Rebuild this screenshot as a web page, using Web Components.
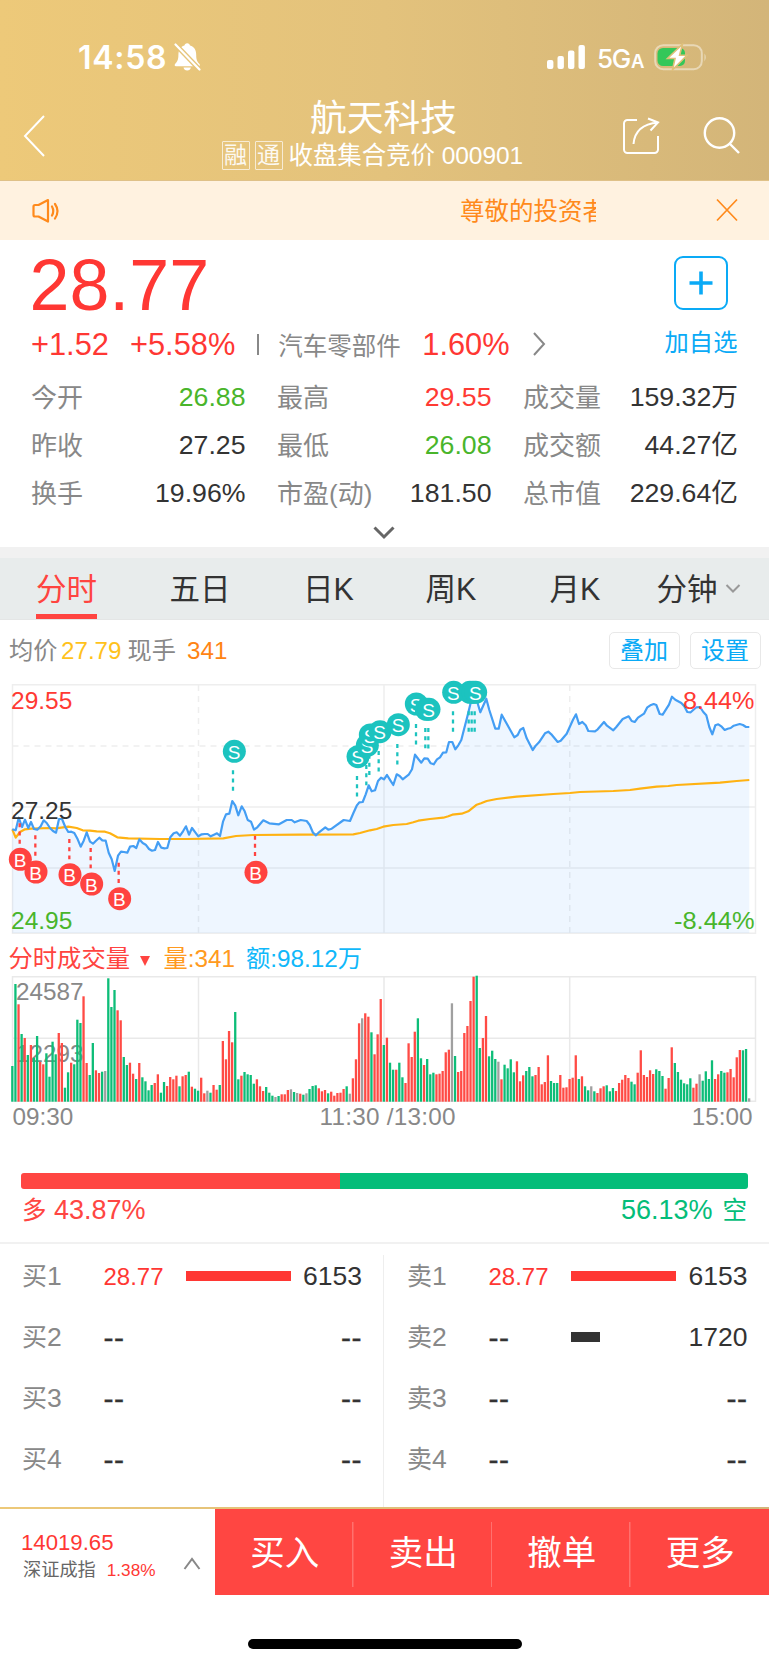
<!DOCTYPE html>
<html lang="zh-CN">
<head>
<meta charset="utf-8">
<title>航天科技 000901</title>
<style>
body{margin:0;width:769px;height:1665px;overflow:hidden;background:#fff;color:#333;font-family:"Liberation Sans","Noto Sans CJK SC",sans-serif}
</style>
</head>
<body>
<stock-app></stock-app>
<script>
const define = (name, html, init) => customElements.define(name, class extends HTMLElement {
  constructor() {
    super();
    const root = this.attachShadow({ mode: 'open' });
    const t = document.createElement('template');
    t.innerHTML = '<style>*{box-sizing:border-box}:host{display:block;box-sizing:border-box}svg{display:block;flex:none}</style>' + (typeof html === 'function' ? html(this) : html);
    root.append(t.content.cloneNode(true));
  }
  connectedCallback() { if (init) init(this, this.shadowRoot); }
});

define('status-bar', `
<style>
:host{display:flex;height:96px;padding:24px 61px 0 78px;align-items:center;color:#fff;font-family:Inter,sans-serif}
.time{font-size:32px;font-weight:600;line-height:40px;width:96px;letter-spacing:.7px;margin-top:-5px}
.sp{flex:1}
.net{font-size:26px;font-weight:500;line-height:40px;width:57px;margin-left:11px;white-space:nowrap;margin-top:-1px;letter-spacing:-1.300px}
.net small{font-size:18.500px;font-weight:600;margin-left:1px}
svg{margin-top:-6px}
</style>
<div class="time">14:58</div>
<svg width="27" height="30" viewBox="0 0 27 30"><path fill="#fff" d="M13.200 1.200c1.600 0 2.600 1 2.800 2.400 4.200 1.200 6.200 4.500 6.200 9.200 0 5.500 1.200 7.200 3.300 9.100.7.8.4 2.300-.8 2.300H1.900c-1.300 0-1.600-1.400-.8-2.300 2.300-2.300 3.300-4 3.300-9.100 0-4.700 2-8 6-9.200.2-1.400 1.200-2.400 2.800-2.400zM9.500 25.600h7.400c-.4 1.900-1.800 3-3.700 3s-3.300-1.100-3.700-3z"/><path stroke="#e6c57a" stroke-width="5" d="M.5 1.500 26 28"/><path stroke="#fff" stroke-width="2.200" stroke-linecap="round" d="M1.500 2.500 25.500 27.500"/></svg>
<div class="sp"></div>
<svg width="40" height="26" viewBox="0 0 40 26" fill="#fff"><rect x="1" y="16" width="6.400" height="9" rx="2"/><rect x="11.500" y="12" width="6.400" height="13" rx="2"/><rect x="22" y="6.500" width="6.400" height="18.500" rx="2"/><rect x="32.500" y="1" width="6.400" height="24" rx="2"/></svg>
<div class="net">5G<small>A</small></div>
<svg width="54" height="28" viewBox="0 0 54 28"><rect x="1.200" y="2.200" width="46.600" height="24" rx="8" fill="none" stroke="#fff" stroke-opacity=".45" stroke-width="2"/><path d="M50.500 10.500q2.500 3.500 0 8z" fill="#fff" fill-opacity=".5"/><path d="M9 5h17a5 5 0 0 1 5 5v8a5 5 0 0 1-5 5H9a5.500 5.500 0 0 1-5.500-5.500v-7A5.500 5.500 0 0 1 9 5z" fill="#34c759"/><path d="M28.500 1.200 13.500 15.500h7.500l-2.500 11.300L33 12.200h-7.400z" fill="#fff" stroke="#dfc07a" stroke-width="1.600"/></svg>
`);

define('app-header', `
<style>
:host{height:181px;background:linear-gradient(90deg,#edc979,#e3c27c 50%,#d3b579);border-bottom:1px solid #dfc188;color:#fff}
.row{display:flex;height:84px}
.back{margin:17px 0 0 22px}
.mid{width:330px;margin-left:174px;margin-top:2px}
h1{margin:0;font-weight:400;font-size:36.800px;line-height:42px;text-align:center;padding-right:3px}
.sub{display:flex;align-items:center;font-size:24.500px;line-height:32px;height:34px;white-space:nowrap;margin-top:-2px;margin-left:1.500px;padding-top:1px}
.tag{border:1px solid rgba(255,255,255,.75);width:28px;height:29px;font-size:23px;line-height:26px;margin-right:5px;text-align:center;border-radius:1px;opacity:.9}
.sub b{font-weight:400;margin-left:1px;letter-spacing:-.08px}
.share{margin:18px 0 0 71px}
.find{margin:19px 0 0 41px}
</style>
<status-bar></status-bar>
<div class="row">
<svg class="back" width="24" height="44" viewBox="0 0 24 44" fill="none" stroke="#fff" stroke-width="2"><path d="M22 3 3 23 22 43"/></svg>
<div class="mid"><h1>航天科技</h1><div class="sub"><span class="tag">融</span><span class="tag">通</span><b>收盘集合竞价 000901</b></div></div>
<svg class="share" width="40" height="42" viewBox="0 0 40 42" fill="none" stroke="#fff" stroke-width="2"><path d="M16 6H6.500A3.500 3.500 0 0 0 3 9.500v26A3.500 3.500 0 0 0 6.500 39h27a3.500 3.500 0 0 0 3.500-3.500V22"/><path d="M12.500 30C13.500 18 20 10 37 8.500M27 4.500l10 4-7.500 8"/></svg>
<svg class="find" width="40" height="42" viewBox="0 0 40 42" fill="none" stroke="#fff" stroke-width="2.400"><circle cx="17.500" cy="18" r="14.700"/><path d="m28 29 9 9"/></svg>
</div>`);

define('notice-bar', `
<style>
:host{display:flex;height:59px;background:#fff2e0;color:#ff8a1c;padding-left:31px}
.msg{margin:15px 0 0 401px;width:136px;overflow:hidden;white-space:nowrap;font-size:24.500px;line-height:32px}
</style>
<svg style="margin-top:16px" width="28" height="28" viewBox="0 0 28 28" fill="none" stroke="#ff8a1c" stroke-width="2.200" stroke-linejoin="round" stroke-linecap="round"><path d="M7.500 8H4Q2.500 8 2.500 9.500v8.500q0 1.500 1.500 1.500h3.500l9.500 5V3z"/><path d="M21 9.500q2.500 4.500 0 9M24 7q5 7 0 14.500"/></svg>
<div class="msg">尊敬的投资者</div>
<svg style="margin:17px 0 0 119px" width="24" height="24" viewBox="0 0 24 24" stroke="#ff8a1c" stroke-width="1.700"><path d="m2 1.500 20 21M22 1.500 2 22.500"/></svg>`);

define('stat-cell', `
<style>
:host{display:flex;justify-content:space-between;font-size:26.700px;line-height:48px;white-space:nowrap;color:#333}
.l{color:#888;font-size:26px;padding-top:1px;height:48px;margin-left:-.5px}
:host([up]){color:#ff3a33}:host([down]){color:#49b52b}
</style><span class="l"><slot name="l"></slot></span><span><slot></slot></span>`);

define('quote-panel', `
<style>
:host{height:307px;color:#ff3733}
.top{display:flex;justify-content:space-between;padding:0 30px 0 29px}
.price{font-size:71.800px;line-height:80px;margin-top:5px;padding-left:.5px}
.chg{display:flex;align-items:center;font-size:30.800px;line-height:40px;height:40px;white-space:nowrap;padding-left:2px;margin-bottom:1px}
.chg i{width:2px;height:21px;background:#888;margin:-2px 19px 0 22px}
.chg u{text-decoration:none;color:#888;font-size:24.500px;width:122px;margin:3px 22px 0 0}
.fav{width:76px;display:flex;flex-direction:column;align-items:center;color:#0aaaf6;font-size:24.300px;line-height:32px;padding-top:16px;white-space:nowrap}
.box{width:54px;height:54px;border:2px solid #0aaaf6;border-radius:9px;margin:0 1px 17px 0;display:grid;place-items:center}
.grid{display:grid;grid-template-columns:214px 214px 214.500px;column-gap:32px;margin:7px 0 0 31.500px}
.more{margin:9px auto 0;position:relative;left:-.5px}
</style>
<div class="top"><div><div class="price">28.77</div>
<div class="chg"><span style="width:99px">+1.52</span><span>+5.58%</span><i></i><u>汽车零部件</u><span>1.60%</span><svg style="margin:-2px 0 0 21px" width="16" height="24" viewBox="0 0 16 24" fill="none" stroke="#888" stroke-width="2"><path d="m3 1 10 11L3 23"/></svg></div></div>
<div class="fav"><div class="box"><svg width="24" height="24"><path d="M0.500 12h23M12 .5v23" stroke="#0aaaf6" stroke-width="3.600"/></svg></div><span>加自选</span></div></div>
<div class="grid">
<stat-cell down><span slot="l">今开</span>26.88</stat-cell><stat-cell up><span slot="l">最高</span>29.55</stat-cell><stat-cell><span slot="l">成交量</span>159.32万</stat-cell>
<stat-cell><span slot="l">昨收</span>27.25</stat-cell><stat-cell down><span slot="l">最低</span>26.08</stat-cell><stat-cell><span slot="l">成交额</span>44.27亿</stat-cell>
<stat-cell><span slot="l">换手</span>19.96%</stat-cell><stat-cell><span slot="l">市盈(动)</span>181.50</stat-cell><stat-cell><span slot="l">总市值</span>229.64亿</stat-cell>
</div>
<svg class="more" width="24" height="14" viewBox="0 0 24 14" fill="none" stroke="#666" stroke-width="3"><path d="m2.500 1.500 9.500 9.500 9.500-9.500"/></svg>`);

define('tab-bar', `
<style>
:host{display:flex;height:73px;border-top:11px solid #f1f1f1;background:#e8ecec;padding-left:36px;font-size:30.500px;line-height:63px;color:#333;white-space:nowrap;border-bottom:1px solid #e4e6e6}
span{flex:none}.on{color:#ff4440;border-bottom:5px solid #ff4440;width:61px;height:61px}
</style>
<span class="on">分时</span><span style="margin-left:72.500px;width:133.500px">五日</span><span style="width:122.500px">日K</span><span style="width:124px">周K</span><span style="width:107px">月K</span><span style="width:68px">分钟</span><svg style="margin-top:26px" width="16" height="9" viewBox="0 0 16 9" fill="none" stroke="#999" stroke-width="2"><path d="m1.500 1 6.500 6.500L14.500 1"/></svg>`);

define('chart-head', `
<style>
:host{display:flex;height:64px;font-size:24.200px;line-height:61.500px;color:#888;padding-left:9px;white-space:nowrap}
span{flex:none}
.b{width:71px;height:37px;border:1.500px solid #e8e8e8;border-radius:5px;line-height:35px;text-align:center;color:#0aaaf6;margin-top:12px;font-size:24px}
</style>
<span style="width:52px">均价</span><span style="color:#ffc21c;width:66.500px">27.79</span><span style="width:59.500px">现手</span><span style="color:#ff8414;width:421.500px">341</span><span class="b">叠加</span><span class="b" style="margin-left:10px">设置</span>`);

const seg = (off, s) => s.trim().split(/\s+/).map(p => { const [x, y] = p.split(',').map(Number); return [(x + off) / 3, y / 3 - 14]; });
const poly = pts => pts.map(p => p[0].toFixed(1) + ',' + p[1].toFixed(1)).join(' ');
const price = [
  ...seg(0, `37,478 47,481 56,443 66,471 75,449 85,474 93,456 102,477 112,479 122,469 131,451 140,459 150,474 159,483 168,488 177,447 186,447 196,471 205,486 214,485 223,489 233,508 242,530 251,512 260,487 270,515 279,521 288,512 298,503 307,511 317,512 326,548 335,568 344,603 354,557 363,545 372,546 382,548 390,530 400,528 409,534 418,508 428,519 437,524 447,537 456,542 465,540 474,516 484,533 493,535 502,534 511,502 521,490 530,487 540,497 549,484 558,469 567,494 576,474 586,487 595,499 605,493 614,492 623,492 632,499 642,494 651,490 660,498 669,455 678,433 688,431 697,393 706,407 715,436 725,409 734,424 743,450 753,455`),
  ...seg(600, `162,479 172,472 190,451 208,460 237,463 260,450 275,450 284,457 302,450 320,453 329,465 339,488 348,496 357,487 376,472 385,479 395,476 431,450 450,453 460,430 470,407 478,397 488,396 497,373 506,346 515,364 525,361 534,333 543,323 552,328 561,315 571,331 580,345 590,313 599,318 608,328 626,314 636,298 645,254 655,267 664,278 673,265 683,266 692,280 701,283 711,268 720,262 729,248 739,247 747,216 757,216`),
  ...seg(1200, `166,238 175,226 184,210 193,175 202,140 212,98 222,95 230,90 241,127 259,86 268,120 286,176 296,176 305,134 343,202 353,195 361,179 370,174 380,205 398,240 407,227 417,217 435,190 445,185 454,193 473,216 482,212 500,191 519,149 528,133 537,162 547,156 557,166 565,183 585,184 593,178 612,156 621,167 640,181 649,171 668,147 686,139 695,153 704,156 714,143 732,131 742,112 751,106 761,102 769,105 779,132 788,134 807,104 816,80 826,89 844,99 853,109 862,126 872,127 889,112 900,111 910,126 919,136 928,171 937,193 946,166 955,163 965,170 974,180 983,176 992,174 1001,167 1019,162 1029,165 1038,171 1048,171`)];
const avg = [
  ...seg(0, `37,478 47,503 60,486 75,478 93,476 150,474 168,475 205,470 230,474 248,481 270,482 290,484 315,485 330,490 352,502 385,505 480,507 560,507 670,505 708,498 760,495`),
  ...seg(600, `300,494 460,493 480,489 510,481 530,477 550,470 580,465 620,462 640,457 655,452 690,447 730,443 745,439 757,434 785,431`),
  ...seg(1200, `205,424 230,404 243,400 260,393 290,387 350,380 460,372 510,369 540,366 640,363 690,360 720,356 770,350 805,348 830,345 960,338 1010,333 1048,330`)];
/* trade marks: side, centre x, centre y, stem x, stem top, stem bottom */
const marks = [['B',61,568,59,460,521],['B',108,606,106,496,557],['B',210,614,208,507,568],['B',275,642,272,534,595],['B',359,686,356,578,640],['B',768,607,765,497,560],
['S',703,244,699,301,362],['S',1074,260,1071,318,380],['S',1102,226,1099,285,346],['S',1111,195,1108,254,315],['S',1140,185,1136,243,305],['S',1195,164,1192,222,284],['S',1249,102,1248,162,224],['S',1279,118,1276,174,235],['S',1287,118,1285,174,236],['S',1361,67,1359,124,186],['',1410,67,1406,124,186],['',1419,67,1415,124,186],['S',1427,67,1424,124,186]];

define('price-chart', () => {
  const c = { B: '#ff4340', S: '#1cc3bf', '': '#1cc3bf' };
  const stems = marks.map(m => `<path d="M${m[3] / 3} ${m[4] / 3 - 14}V${m[5] / 3 - 14}" stroke="${c[m[0]]}" stroke-width="2.300" stroke-dasharray="4 4.200"/>`).join('');
  const dots = marks.map(m => `<circle cx="${m[1] / 3}" cy="${m[2] / 3 - 14}" r="11.500" fill="${c[m[0]]}"/>` + (m[0] ? `<text x="${m[1] / 3 - .3}" y="${m[2] / 3 - 14 + 7.500}" fill="#fff" font-size="19" text-anchor="middle">${m[0]}</text>` : '')).join('');
  return `<style>:host{height:254px}svg{overflow:visible}</style>
<svg width="769" height="254" viewBox="0 0 769 254" fill="none">
<g stroke="#eee" stroke-width="1.500"><path d="M12.500 .8H755.500V249.300H12.500z"/><path d="M12.500 123H755.500M12.500 184H755.500M384 1V249"/><path d="M12.500 62H755.500" stroke-dasharray="6 5"/><path d="M198.500 1V249M569.700 1V249" stroke-dasharray="6 5"/></g>
<polygon points="12.300,249 ${poly(price)} 749.300,249" fill="#409cff" fill-opacity=".09"/>
<polyline points="${poly(avg)}" stroke="#ffb212" stroke-width="2.200" stroke-linejoin="round"/>
<polyline points="${poly(price)}" stroke="#449ef4" stroke-width="2.200" stroke-linejoin="round"/>
<g font-size="24.500"><text x="11" y="25" fill="#ff3a33">29.55</text><text x="11" y="134.500" fill="#333">27.25</text><text x="11" y="244.500" fill="#49b52b">24.95</text><text x="683" y="25" textLength="71.500" lengthAdjust="spacingAndGlyphs" fill="#ff3a33">8.44%</text><text x="674" y="244.500" textLength="80.500" lengthAdjust="spacingAndGlyphs" fill="#49b52b">-8.44%</text></g>
${stems}${dots}</svg>`;
});

const vols = `393g 147g 208r 297g 309r 360g 330r 368g 303g 381r 388r 355g 425g 320g 358g 294r 324r 458g 412g 383r 388g 254g 264g 184r 384r 420g 324g 406r 414r 410g 408x 130g 216g 165g 226r 256r 366g 390g 383r 416r 432g 384r 427g 439g 466g 450g 444r 418r 473g 441g 453r 426r 433r 422r 454g 424r 420r 410g 455r 461g 467g 428r 475r 467x 473g 450r 464r 450g 318r 373r 288r 322r 231g 433g 422r 411g 418g 420g 446g 433r 454r 468r 456g 473g 482g 486x 483g 478r 478r 465r 463x 471g 474x 476r 479g 475x 462g 453g 451g 460r 469r 465r 475g 470r 482r 474r 473r 462r 454g 476x 430r 373r 265r 250x 235r 245r 292g 358r 298r 192r 330g 308r 383g 404g 404r 383g 427g 444r 325r 366r 290r 250g 370g 390r 372g 418g 413g 418r 416r 408r 352r 344r 205x 363g 411r 408r 294r 273r 198r 125r 122g 339g 309r 243r 364g 347g 372g 380x 433r 389g 400g 373g 412g 379r 439r 421r 408g 396g 424g 420r 396r 448r 441r 361r 438g 444g 444g 420r 458r 457r 432r 428r 361r 432g 424r 454g 466g 454x 469g 474r 460r 454r 451g 469g 459g 468r 444r 434r 420r 429r 440g 448g 413r 346r 420r 426r 406r 417r 403g 408g 423g 461r 429r 337r 384g 411g 434g 445g 448g 430g 458r 446r 418x 437g 409g 432g 376g 432r 418r 408g 413g 412r 402r 427r 367r 345r 346g 342g 490x`.split(' ');
define('volume-chart', () => {
  const c = { r: '#ff4b45', g: '#0dbd78', x: '#a0a0a0' };
  const bars = vols.map((v, i) => { const t = parseInt(v) / 3 - 3; return `<rect x="${((37 + 9.2875 * i) / 3 - 1.150).toFixed(2)}" y="${t.toFixed(1)}" width="2.300" height="${(163.700 - t).toFixed(1)}" fill="${c[v.slice(-1)]}"/>`; }).join('');
  return `<style>:host{height:197px}.h{display:flex;height:38px;padding-left:8.500px;font-size:24.300px;line-height:42px;white-space:nowrap}.h span{flex:none}svg{margin-top:-38px;overflow:visible}.h svg{margin:18px 13px 0 10.500px}</style>
<div class="h"><span style="color:#ff4440">分时成交量</span><svg width="10" height="10"><path d="M0 0h10L5 10z" fill="#ff4440"/></svg><span style="color:#ff9a20;width:82.500px">量:341</span><span style="color:#10b8fa">额:98.12万</span></div>
<svg width="769" height="196" viewBox="0 0 769 196" style="margin-top:0;height:158px" preserveAspectRatio="xMinYMin slice"></svg>
`.replace(/<svg width="769"[^]*$/, '') + `
<svg width="769" height="196" viewBox="0 0 769 196" fill="none">
<path stroke="#e9e9e9" stroke-width="1.500" d="M12.500 38.800H755.500V163.300H12.500zM12.500 100.200H755.500M198.500 39V163M384 39V163M569.700 39V163"/>
<g font-size="24.300" fill="#888"><text x="16" y="62">24587</text><text x="16" y="123.500">12293</text><text x="12.500" y="187">09:30</text><text x="319.500" y="187" textLength="136">11:30 /13:00</text><text x="752.500" y="187" text-anchor="end">15:00</text></g>
${bars}</svg>`;
});

define('ratio-bar', `
<style>
:host{height:109px;border-bottom:2px solid #f1f1f1;padding:38px 21px 0}
.bar{height:16px;border-radius:3px;background:linear-gradient(90deg,#ff4642 319px,#04bd79 319px)}
.t{display:flex;justify-content:space-between;font-size:27px;line-height:40px;padding:1px 1px 0;white-space:nowrap;color:#04bd79}
small{font-size:24.500px}
</style>
<div class="bar"></div><div class="t"><span style="color:#ff4642"><small style="margin-right:7.500px">多</small>43.87%</span><span>56.13%<small style="margin-left:10px">空</small></span></div>`);

define('order-row', `
<style>
:host{display:flex;height:61px;line-height:61px;font-size:26.500px;align-items:center;padding-left:22px;white-space:nowrap}
.n{width:81.500px;color:#888;flex:none}
.p{width:82.500px;font-size:24px;flex:none}
.b{height:10.500px;flex:none;margin-top:-1px}
.v{flex:1;text-align:right}
.d{font-size:30px;letter-spacing:.5px;-webkit-text-stroke:.4px #333}
small{font-size:25px}
</style><span class="n"></span><span class="p"></span><span class="b"></span><span class="v"></span>`, (h, r) => {
  const q = s => r.querySelector(s), a = s => h.getAttribute(s);
  const n = a('name');
  q('.n').innerHTML = `<small>${n[0]}</small>${n[1]}`;
  q('.p').textContent = a('price') || '--';
  q('.v').textContent = a('vol') || '--';
  if (a('price')) q('.p').style.color = '#ff3733'; else q('.p').classList.add('d');
  if (!a('vol')) q('.v').classList.add('d');
  if (a('bar')) q('.b').style.cssText = `width:${a('bar')}px;background:${a('price') ? '#ff3733' : '#333'}`;
});

define('order-book', `
<style>
:host{display:flex;height:263px;overflow:hidden}
div{width:384px;padding-right:22px;height:320px;padding-top:2px;flex:none}
div.r{width:385px;padding:2px 21.500px 0 1px}
i{width:1px;background:#eee;margin:11px 0 0;height:252px;flex:none;margin-left:-1px}
</style>
<div><order-row name="买1" price="28.77" bar="105" vol="6153"></order-row><order-row name="买2"></order-row><order-row name="买3"></order-row><order-row name="买4"></order-row></div><i></i>
<div class="r"><order-row name="卖1" price="28.77" bar="105" vol="6153"></order-row><order-row name="卖2" bar="29" vol="1720"></order-row><order-row name="卖3"></order-row><order-row name="卖4"></order-row></div>`);

define('trade-bar', `
<style>
:host{display:flex;height:88px;border-top:2px solid;border-image:linear-gradient(90deg,#edc979,#d3b579) 1;color:#fff}
.idx{width:215px;display:flex;justify-content:space-between;color:#ff3733;padding:20px 14px 0 21px;white-space:nowrap}
.a{font-size:22.200px;line-height:28px}
.b{font-size:17.200px;line-height:24px;margin-top:1px}.b span{color:#666;font-size:18.200px;margin:0 11px 0 2px}
.act{flex:1;display:grid;grid-template-columns:repeat(4,1fr);background:#ff4642;height:86px;font-size:34.500px;line-height:88px;text-align:center}
.act span{padding-left:1px}
.act span:not(:last-child){background:linear-gradient(#ff716e,#ff716e) 100% 13px/1.500px 65px no-repeat}
</style>
<div class="idx"><div><div class="a">14019.65</div><div class="b"><span>深证成指</span>1.38%</div></div><svg style="margin-top:27.500px" width="18" height="13" viewBox="0 0 18 13" fill="none" stroke="#888" stroke-width="2"><path d="m1.500 12 7.500-10 7.500 10"/></svg></div>
<div class="act"><span>买入</span><span>卖出</span><span>撤单</span><span>更多</span></div>`);

define('home-indicator', `<style>:host{height:70px;padding:44px 0 0 248px}div{width:273.500px;height:10px;border-radius:5px;background:#000}</style><div></div>`);

define('stock-app', `<app-header></app-header><notice-bar></notice-bar><quote-panel></quote-panel><tab-bar></tab-bar><chart-head></chart-head><price-chart></price-chart><volume-chart></volume-chart><ratio-bar></ratio-bar><order-book></order-book><trade-bar></trade-bar><home-indicator></home-indicator>`);
</script>
</body>
</html>
